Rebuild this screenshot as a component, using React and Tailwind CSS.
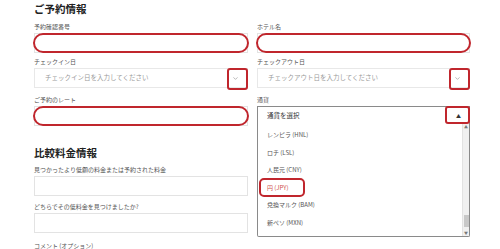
import { ChevronDown } from 'lucide-react';

const font = { fontFamily: '"Noto Sans CJK JP", "Noto Sans", sans-serif' };

// 赤い注釈の枠
function Ring({ className }) {
  return <span className={`pointer-events-none absolute border-2 border-[#c0262d] ${className}`} />;
}

function Label({ children }) {
  return <div className="text-[6px] leading-[8px] h-[8px] text-[#555] mb-[2px] whitespace-nowrap">{children}</div>;
}

function TextBox({ ring }) {
  return (
    <div className="relative h-[20px] border border-[#e3e3e3] bg-white">
      {ring && <Ring className="-left-[2px] -right-[2px] -top-[1px] -bottom-[1px] rounded-[10px]" />}
    </div>
  );
}

function DateBox({ placeholder }) {
  return (
    <div className="relative h-[20px] border border-[#e8e8e8] bg-white flex items-center pl-[10px] pr-[6px]">
      <span className="flex-1 text-[6.5px] text-[#9a9a9a] whitespace-nowrap">{placeholder}</span>
      <ChevronDown size={7} strokeWidth={2} className="text-[#888] mr-[2px]" />
      <Ring className="right-[-1px] -top-[1px] w-[21px] h-[22px] rounded-[3px]" />
    </div>
  );
}

const currencies = [
  { name: 'レンピラ (HNL)' },
  { name: 'ロチ (LSL)' },
  { name: '人民元 (CNY)' },
  { name: '円 (JPY)', active: true },
  { name: '兌換マルク (BAM)' },
  { name: '新ペソ (MXN)' },
];

export default function App() {
  return (
    <div className="w-[500px] h-[249px] overflow-hidden bg-white pl-[34px] pt-[3px]" style={font}>
      <h1 className="text-[10.5px] leading-[12px] font-bold text-[#222]">ご予約情報</h1>

      <div className="grid grid-cols-[214px_213px] gap-x-[9px] gap-y-[5px] mt-[8px]">
        <div>
          <Label>予約確認番号</Label>
          <TextBox ring />
        </div>
        <div>
          <Label>ホテル名</Label>
          <TextBox ring />
        </div>

        <div>
          <Label>チェックイン日</Label>
          <DateBox placeholder="チェックイン日を入力してください" />
        </div>
        <div>
          <Label>チェックアウト日</Label>
          <DateBox placeholder="チェックアウト日を入力してください" />
        </div>

        <div className="mt-[3px]">
          <Label>ご予約のレート</Label>
          <TextBox ring />
        </div>
        <div className="mt-[3px]">
          <Label>通貨</Label>
          <div className="relative">
            <div className="relative h-[18px] border border-[#8a8a8a] border-b-0 bg-white flex items-center pl-[9px] pr-[8px]">
              <span className="flex-1 text-[6.5px] text-[#333]">通貨を選択</span>
              <span className="text-[5px] text-[#333]">▲</span>
              <Ring className="right-[-1px] -top-[1px] w-[25px] h-[18px] rounded-[3px]" />
            </div>
            {/* 開いたドロップダウン */}
            <div className="absolute left-0 right-0 top-[18px] h-[113px] border border-[#8a8a8a] border-t-0 bg-white flex z-10 rounded-b-[2px]">
              <div className="flex-1 flex flex-col pt-[2px] pl-[9px]">
                {currencies.map((c) => (
                  <div key={c.name} className="relative h-[17.5px] flex items-center">
                    <span className={`text-[6px] whitespace-nowrap ${c.active ? 'text-[#d0504a]' : 'text-[#555]'}`}>{c.name}</span>
                    {c.active && <Ring className="-left-[8px] top-[-1px] w-[46px] h-[19px] rounded-[5px]" />}
                  </div>
                ))}
              </div>
              <div className="w-[7px] bg-[#f0f0f0] border-l border-[#e2e2e2] flex flex-col items-center justify-between py-[1px]">
                <span className="text-[4px] leading-[4px] text-[#777]">▲</span>
                <div className="w-[5px] h-[12px] bg-[#c8c8c8] mt-auto mb-[4px]" />
                <span className="text-[4px] leading-[4px] text-[#777]">▼</span>
              </div>
            </div>
          </div>
        </div>
      </div>

      <h2 className="text-[10.5px] leading-[12px] font-bold text-[#222] mt-[21px]">比較料金情報</h2>

      <div className="w-[214px] mt-[7px] flex flex-col gap-[7px]">
        <div>
          <Label>見つかったより低額の料金または予約された料金</Label>
          <TextBox />
        </div>
        <div>
          <Label>どちらでその低料金を見つけましたか?</Label>
          <TextBox />
        </div>
        <div className="mt-[2px]">
          <Label>コメント (オプション)</Label>
        </div>
      </div>
    </div>
  );
}
